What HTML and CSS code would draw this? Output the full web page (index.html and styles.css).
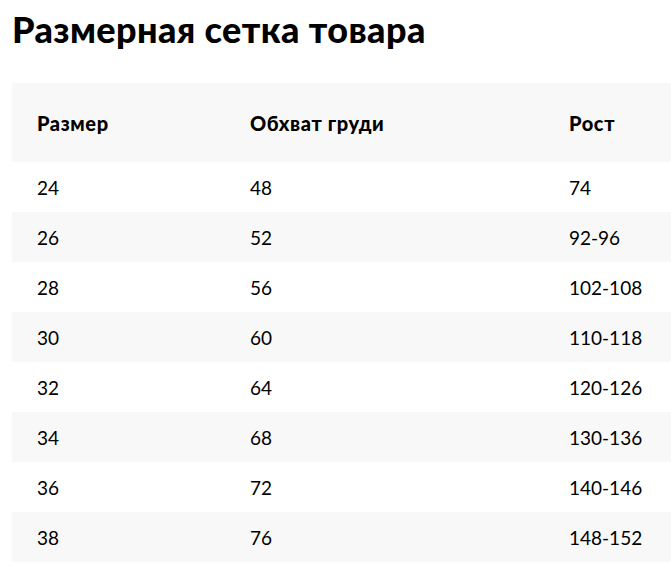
FILE: index.html
```html
<!DOCTYPE html>
<html lang="ru">
<head>
<meta charset="utf-8">
<link rel="stylesheet" href="styles.css">
</head>
<body>
<div class="page">
  <h1 class="title">Размерная сетка товара</h1>
  <table class="sizes">
    <thead>
      <tr><th class="c1">Размер</th><th class="c2">Обхват груди</th><th class="c3">Рост</th></tr>
    </thead>
    <tbody>
      <tr><td>24</td><td>48</td><td>74</td></tr>
      <tr><td>26</td><td>52</td><td>92-96</td></tr>
      <tr><td>28</td><td>56</td><td>102-108</td></tr>
      <tr><td>30</td><td>60</td><td>110-118</td></tr>
      <tr><td>32</td><td>64</td><td>120-126</td></tr>
      <tr><td>34</td><td>68</td><td>130-136</td></tr>
      <tr><td>36</td><td>72</td><td>140-146</td></tr>
      <tr><td>38</td><td>76</td><td>148-152</td></tr>
    </tbody>
  </table>
</div>
</body>
</html>
```

FILE: styles.css
```css
html, body {
  margin: 0;
  padding: 0;
  background: #fff;
  overflow: hidden;
}
.page {
  padding: 0 0 0 12px;
  font-family: "Lato", "Noto Sans", sans-serif;
  color: #000;
}
.title {
  margin: 0;
  padding-top: 8px;
  height: 83px;
  box-sizing: border-box;
  font-size: 36px;
  font-weight: 900;
  line-height: 42px;
  letter-spacing: 0.4px;
}
.sizes {
  width: 659px;
  border-collapse: collapse;
  table-layout: fixed;
}
.c1 { width: 188px; }
.c2 { width: 294px; }
.sizes th {
  height: 79px;
  padding: 0 0 0 25px;
  text-align: left;
  font-size: 20px;
  font-weight: 900;
  letter-spacing: 0.6px;
  background: #f8f8f8;
  white-space: nowrap;
}
.sizes td {
  height: 50px;
  padding: 0 0 0 25px;
  font-size: 19px;
  font-weight: 400;
  white-space: nowrap;
}
.sizes tbody tr:nth-child(even) td {
  background: #f8f8f8;
}
```
